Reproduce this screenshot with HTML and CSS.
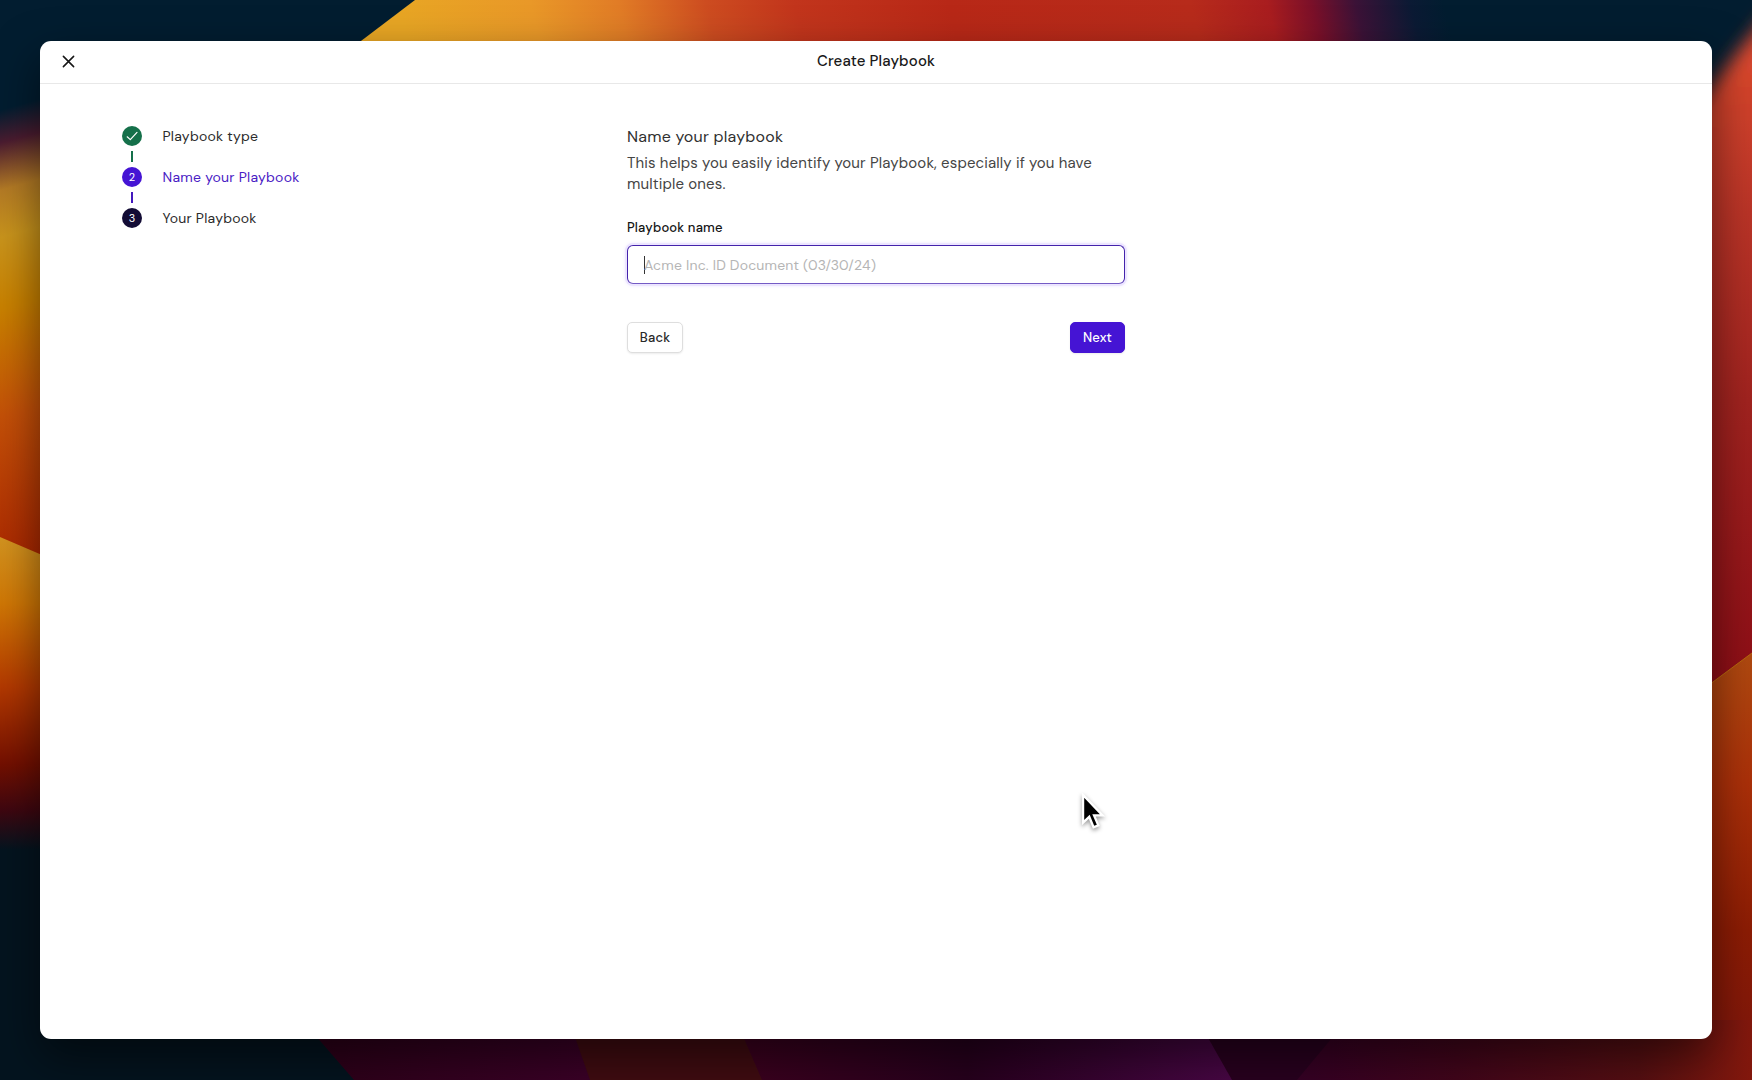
FILE: index.html
```html
<!DOCTYPE html>
<html lang="en">
<head>
<meta charset="utf-8">
<title>Create Playbook</title>
<link rel="stylesheet" href="styles.css">
</head>
<body>
<svg class="wallpaper" viewBox="0 0 1752 1080" aria-hidden="true">
  <defs>
    <linearGradient id="top" gradientUnits="userSpaceOnUse" x1="400" y1="10" x2="1440" y2="-240">
      <stop offset="0" stop-color="#e8a624"/><stop offset=".12" stop-color="#e99828"/>
      <stop offset=".2" stop-color="#e17c26"/><stop offset=".28" stop-color="#cd4c20"/>
      <stop offset=".36" stop-color="#c2351c"/><stop offset=".5" stop-color="#b82817"/>
      <stop offset=".72" stop-color="#b72b1b"/><stop offset=".79" stop-color="#a91d1f"/>
      <stop offset=".83" stop-color="#7b1029"/><stop offset=".87" stop-color="#3b1237"/>
      <stop offset=".92" stop-color="#0b1a34"/><stop offset=".95" stop-color="#021d30"/>
    </linearGradient>
    <linearGradient id="left" gradientUnits="userSpaceOnUse" x1="0" y1="110" x2="120" y2="550">
      <stop offset="0" stop-color="#021d30"/><stop offset=".07" stop-color="#4b1c30"/>
      <stop offset=".17" stop-color="#b47b25"/><stop offset=".27" stop-color="#c9941c"/>
      <stop offset=".42" stop-color="#c98100"/><stop offset=".65" stop-color="#c45008"/>
      <stop offset="1" stop-color="#a72200"/>
    </linearGradient>
    <linearGradient id="left-low" gradientUnits="userSpaceOnUse" x1="0" y1="537" x2="0" y2="870">
      <stop offset="0" stop-color="#d39420"/><stop offset=".2" stop-color="#d07705"/>
      <stop offset=".45" stop-color="#b33900"/><stop offset=".68" stop-color="#741000"/>
      <stop offset=".82" stop-color="#3f0710"/><stop offset=".94" stop-color="#04141f"/>
    </linearGradient>
    <linearGradient id="right" gradientUnits="userSpaceOnUse" x1="1700" y1="60" x2="1725" y2="680">
      <stop offset="0" stop-color="#d9472d"/><stop offset=".25" stop-color="#ba3427"/>
      <stop offset=".55" stop-color="#a1231f"/><stop offset="1" stop-color="#8e0e16"/>
    </linearGradient>
    <linearGradient id="right-low" gradientUnits="userSpaceOnUse" x1="0" y1="653" x2="0" y2="1080">
      <stop offset="0" stop-color="#b04a10"/><stop offset=".3" stop-color="#ab3009"/>
      <stop offset=".65" stop-color="#8c1c04"/><stop offset="1" stop-color="#7d150d"/>
    </linearGradient>
    <linearGradient id="base-right" x1="0" x2="1">
      <stop offset="0" stop-color="#360025"/><stop offset=".35" stop-color="#42051b"/>
      <stop offset=".75" stop-color="#560f12"/><stop offset="1" stop-color="#83180d"/>
    </linearGradient>
    <linearGradient id="plum" x1="0" x2="1">
      <stop offset="0" stop-color="#2c0018"/><stop offset="1" stop-color="#3d0029"/>
    </linearGradient>
    <linearGradient id="violet" x1="0" x2="1">
      <stop offset="0" stop-color="#3d001f"/><stop offset=".45" stop-color="#27001d"/><stop offset="1" stop-color="#4b0748"/>
    </linearGradient>
    <filter id="soft" x="-30%" y="-30%" width="160%" height="160%"><feGaussianBlur stdDeviation="9"/></filter>
  </defs>
  <rect width="1752" height="1080" fill="#021d30"/>
  <path d="M415 0H1540V110H270Z" fill="url(#top)"/>
  <path d="M-10 113 70 90V580H-10Z" fill="url(#left)"/>
  <path d="M0 537 70 567V900H0Z" fill="url(#left-low)"/>
  <rect y="860" width="400" height="220" fill="#04141f"/>
  <path d="M1790 -10Q1740 43 1695 112V720H1800Z" fill="url(#right)" filter="url(#soft)"/>
  <path d="M1730 120H1752V700H1695V160Z" fill="url(#right)"/>
  <path d="M1690 699 1752 653V1080H1690Z" fill="url(#right-low)"/>
  <path d="M1690 699 1752 653" stroke="#b96a0c" stroke-width="1"/>
  <path d="M302 1020 354 1080H620V1020Z" fill="url(#plum)"/>
  <path d="M569 1020 590 1080H780V1020Z" fill="#400c11"/>
  <path d="M736 1020 762 1080H1250V1020Z" fill="url(#violet)"/>
  <path d="M1198 1020 1232 1080H1310L1350 1020Z" fill="#29001f"/>
  <path d="M1347 1020 1297 1080H1752V1020Z" fill="url(#base-right)"/>
</svg>
<main class="window">
  <header class="header">
    <button class="close" aria-label="Close">
      <svg viewBox="0 0 14 14"><path d="M1.5 1.5 12.5 12.5M12.5 1.5 1.5 12.5"/></svg>
    </button>
    <h1 class="title">Create Playbook</h1>
  </header>
  <div class="content">
    <ol class="steps">
      <li class="step done"><span class="marker"><svg viewBox="0 0 20 20"><path d="M5.2 10.8 8.3 13.6 15 6.4"/></svg></span><span>Playbook type</span></li>
      <li class="step current"><span class="marker">2</span><span>Name your Playbook</span></li>
      <li class="step"><span class="marker">3</span><span>Your Playbook</span></li>
    </ol>
    <form class="form">
      <h2 class="heading">Name your playbook</h2>
      <p class="description">This helps you easily identify your Playbook, especially if you have<br>multiple ones.</p>
      <label class="label" for="name">Playbook name</label>
      <div class="field"><span class="caret"></span><input class="input" id="name" placeholder="Acme Inc. ID Document (03/30/24)"></div>
      <div class="actions">
        <button class="button" type="button">Back</button>
        <button class="button primary" type="button">Next</button>
      </div>
    </form>
  </div>
</main>
<svg class="cursor" viewBox="0 0 28 42" aria-hidden="true"><path d="M2 2V31L8.5 25 13 36 18 34 13.5 23.5H22.5Z"/></svg>
</body>
</html>
```
FILE: styles.css
```css
* { box-sizing: border-box; }
body {
  margin: 0;
  width: 1752px;
  height: 1080px;
  overflow: hidden;
  padding: 41px 40px;
  background: #021d30;
  font-family: "DM Sans", Inter, sans-serif;
  color: #222;
}
.wallpaper { position: absolute; inset: 0; width: 1752px; height: 1080px; }
.window {
  position: relative;
  height: 998px;
  border-radius: 11px;
  background: #fff;
  box-shadow: 0 18px 45px rgba(0, 0, 0, .52);
  overflow: hidden;
}
.header {
  display: grid;
  grid-template-columns: 60px 1fr 60px;
  align-items: center;
  height: 43px;
  padding-bottom: 3px;
  border-bottom: 1px solid #e8e8e8;
}
.close { display: flex; width: 13px; height: 13px; margin: 1px 0 0 22px; padding: 0; border: 0; background: none; }
.close svg { width: 13px; height: 13px; fill: none; stroke: #171717; stroke-width: 1.7; stroke-linecap: round; }
.title { margin: 0; text-align: center; font-size: 15px; font-weight: 500; line-height: 20px; letter-spacing: .13px; color: #191919; }
.content { display: grid; grid-template-columns: 505px 498px; padding: 42px 0 0 82px; }
.steps { display: flex; flex-direction: column; gap: 21.2px; margin: 0; padding: 0; list-style: none; }
.step { position: relative; display: flex; align-items: center; gap: 20.5px; height: 20px; font-size: 14px; letter-spacing: .24px; color: #2b2b2b; }
.step::after { content: ""; position: absolute; left: 9px; top: 25px; width: 2px; height: 11px; background: #4318bd; }
.step:last-child::after { display: none; }
.step.done::after { background: #15704a; }
.marker { display: flex; align-items: center; justify-content: center; width: 20px; height: 20px; border-radius: 50%; background: #130c35; color: #fff; font-size: 11px; letter-spacing: 0; }
.marker svg { width: 20px; fill: none; stroke: #fff; stroke-width: 1.2; stroke-linecap: round; stroke-linejoin: round; }
.done .marker { background: #15704a; }
.current .marker { background: #4514d4; }
.current { color: #4920c4; }
.form { width: 498px; }
.heading { margin: 1px 0 0; font-size: 16px; font-weight: 450; line-height: 20px; letter-spacing: .22px; color: #303030; }
.description { margin: 6px 0 23px; font-size: 15px; line-height: 21px; letter-spacing: .14px; color: #454545; white-space: nowrap; }
.label { display: block; font-size: 13px; font-weight: 500; line-height: 20px; letter-spacing: .18px; color: #151515; }
.field {
  display: flex;
  align-items: center;
  height: 39px;
  margin-top: 7px;
  padding-left: 16px;
  border: 1px solid #4423ab;
  border-bottom-color: #745bc5;
  border-radius: 6px;
  box-shadow: 0 0 0 2px #ece5ff, 0 0 4px 1px #e4dcff;
}
.caret { width: 1px; height: 18px; background: #333; }
.input { flex: 1; margin-left: -1px; padding: 0; border: 0; outline: 0; background: none; font: 14px "DM Sans", Inter, sans-serif; letter-spacing: .18px; }
.input::placeholder { color: #b5b5b5; }
.actions { display: flex; justify-content: space-between; margin-top: 38px; }
.button { height: 31px; width: 56px; padding: 0; border: 1px solid #dedede; border-radius: 5px; background: #fff; box-shadow: 0 1px 2px rgba(0, 0, 0, .08); font: 500 13px "DM Sans", Inter, sans-serif; letter-spacing: .2px; color: #292929; }
.primary { width: 55px; border-color: #4514d4; background: #4514d4; color: #fff; }
.cursor { position: absolute; left: 1081px; top: 793px; width: 27px; height: 40px; fill: #000; stroke: #fff; stroke-width: 2.4; filter: drop-shadow(0 2px 2px rgba(0, 0, 0, .4)); }
```
